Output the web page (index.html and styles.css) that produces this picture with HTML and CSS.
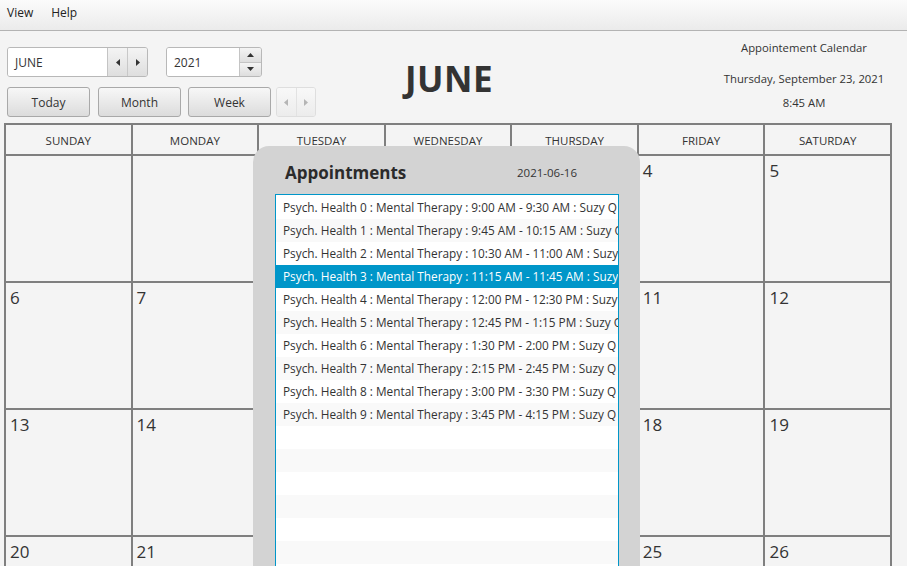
FILE: index.html
```html
<!DOCTYPE html>
<html>
<head>
<meta charset="utf-8">
<link rel="stylesheet" href="styles.css">
</head>
<body>
<div class="menubar"><span class="menu">View</span><span class="menu">Help</span></div>
<div class="toolbar">
  <div class="controls">
    <div class="ctl-row">
      <div class="combo">
        <div class="field month-field">JUNE</div>
        <div class="arrbtn"><svg width="4" height="7" viewBox="0 0 4 7"><path d="M4 0V7L0 3.5Z" fill="#333"/></svg></div>
        <div class="arrbtn"><svg width="4" height="7" viewBox="0 0 4 7"><path d="M0 0V7L4 3.5Z" fill="#333"/></svg></div>
      </div>
      <div class="spinner">
        <div class="field year-field">2021</div>
        <div class="spin-btns">
          <div class="spinbtn"><svg width="7" height="4" viewBox="0 0 7 4"><path d="M0 4H7L3.5 0Z" fill="#333"/></svg></div>
          <div class="spinbtn"><svg width="7" height="4" viewBox="0 0 7 4"><path d="M0 0H7L3.5 4Z" fill="#333"/></svg></div>
        </div>
      </div>
    </div>
    <div class="ctl-row">
      <div class="btn">Today</div>
      <div class="btn">Month</div>
      <div class="btn">Week</div>
      <div class="navpair">
        <div class="navbtn"><svg width="4" height="7" viewBox="0 0 4 7"><path d="M4 0V7L0 3.5Z" fill="#b5b5b5"/></svg></div>
        <div class="navbtn"><svg width="4" height="7" viewBox="0 0 4 7"><path d="M0 0V7L4 3.5Z" fill="#b5b5b5"/></svg></div>
      </div>
    </div>
  </div>
  <div class="title">JUNE</div>
  <div class="info">
    <div class="info-app">Appointement Calendar</div>
    <div class="info-date">Thursday, September 23, 2021</div>
    <div class="info-time">8:45 AM</div>
  </div>
</div>
<div class="calendar">
  <div class="dayname">SUNDAY</div>
  <div class="dayname">MONDAY</div>
  <div class="dayname">TUESDAY</div>
  <div class="dayname">WEDNESDAY</div>
  <div class="dayname">THURSDAY</div>
  <div class="dayname">FRIDAY</div>
  <div class="dayname">SATURDAY</div>
  <div class="day"></div><div class="day"></div><div class="day">1</div><div class="day">2</div><div class="day">3</div><div class="day">4</div><div class="day">5</div>
  <div class="day">6</div><div class="day">7</div><div class="day">8</div><div class="day">9</div><div class="day">10</div><div class="day">11</div><div class="day">12</div>
  <div class="day">13</div><div class="day">14</div><div class="day">15</div><div class="day">16</div><div class="day">17</div><div class="day">18</div><div class="day">19</div>
  <div class="day">20</div><div class="day">21</div><div class="day">22</div><div class="day">23</div><div class="day">24</div><div class="day">25</div><div class="day">26</div>
</div>
<div class="popup">
  <div class="popup-head">
    <div class="popup-title">Appointments</div>
    <div class="popup-date">2021-06-16</div>
  </div>
  <div class="list">
    <div class="item">Psych. Health 0 : Mental Therapy : 9:00 AM - 9:30 AM : Suzy Q</div>
    <div class="item">Psych. Health 1 : Mental Therapy : 9:45 AM - 10:15 AM : Suzy Q</div>
    <div class="item">Psych. Health 2 : Mental Therapy : 10:30 AM - 11:00 AM : Suzy Q</div>
    <div class="item selected">Psych. Health 3 : Mental Therapy : 11:15 AM - 11:45 AM : Suzy Q</div>
    <div class="item">Psych. Health 4 : Mental Therapy : 12:00 PM - 12:30 PM : Suzy Q</div>
    <div class="item">Psych. Health 5 : Mental Therapy : 12:45 PM - 1:15 PM : Suzy Q</div>
    <div class="item">Psych. Health 6 : Mental Therapy : 1:30 PM - 2:00 PM : Suzy Q</div>
    <div class="item">Psych. Health 7 : Mental Therapy : 2:15 PM - 2:45 PM : Suzy Q</div>
    <div class="item">Psych. Health 8 : Mental Therapy : 3:00 PM - 3:30 PM : Suzy Q</div>
    <div class="item">Psych. Health 9 : Mental Therapy : 3:45 PM - 4:15 PM : Suzy Q</div>
    <div class="item"></div>
    <div class="item"></div>
    <div class="item"></div>
    <div class="item"></div>
    <div class="item"></div>
    <div class="item"></div>
    <div class="item"></div>
  </div>
</div>
</body>
</html>
```

FILE: styles.css
```css
html, body {
  margin: 0;
  padding: 0;
}
body {
  width: 907px;
  height: 566px;
  overflow: hidden;
  position: relative;
  background: #f4f4f4;
  font-family: "Open Sans", "Noto Sans", sans-serif;
  font-size: 11.5px;
  color: #333;
}
.menubar {
  height: 30px;
  border-bottom: 1px solid #b3b3b3;
  background: linear-gradient(#fbfbfb, #ebebeb);
  display: flex;
  align-items: center;
  padding-left: 7px;
  gap: 18px;
}
.menu {
  font-size: 12px;
  color: #222;
  margin-top: -6px;
}
.toolbar {
  display: grid;
  grid-template-columns: 1fr auto 1fr;
  padding: 16px 16px 0 7px;
  height: 86px;
  box-sizing: border-box;
}
.controls {
  display: flex;
  flex-direction: column;
  gap: 10px;
}
.ctl-row {
  display: flex;
  align-items: center;
}
.combo {
  display: flex;
  height: 30px;
  width: 141px;
  border: 1px solid #b8b8b8;
  border-radius: 3px;
  box-sizing: border-box;
  overflow: hidden;
}
.field {
  background: #fff;
  display: flex;
  align-items: center;
  padding-left: 7px;
  font-size: 12px;
  color: #333;
}
.month-field {
  width: 93px;
  border-right: 1px solid #c4c4c4;
}
.arrbtn {
  width: 19px;
  display: flex;
  align-items: center;
  justify-content: center;
  background: linear-gradient(#f4f4f4, #dedede);
}
.arrbtn + .arrbtn {
  border-left: 1px solid #c8c8c8;
}
.spinner {
  display: flex;
  height: 30px;
  width: 96px;
  margin-left: 18px;
  border: 1px solid #b8b8b8;
  border-radius: 3px;
  box-sizing: border-box;
  overflow: hidden;
}
.year-field {
  width: 65px;
}
.spin-btns {
  flex: 1;
  display: flex;
  flex-direction: column;
  border-left: 1px solid #c4c4c4;
}
.spinbtn {
  flex: 1;
  display: flex;
  align-items: center;
  justify-content: center;
  background: linear-gradient(#f4f4f4, #dedede);
}
.spinbtn + .spinbtn {
  border-top: 1px solid #c4c4c4;
}
.btn {
  width: 83px;
  height: 30px;
  box-sizing: border-box;
  border: 1px solid #a9a9a9;
  border-radius: 3px;
  background: linear-gradient(#f7f7f7, #dcdcdc);
  display: flex;
  align-items: center;
  justify-content: center;
  font-size: 12px;
  color: #333;
  margin-right: 8px;
}
.btn:nth-child(2) { margin-right: 7px; }
.btn:nth-child(3) { margin-right: 5px; }
.navpair {
  display: flex;
  height: 30px;
  width: 40px;
  border: 1px solid #dedede;
  border-radius: 3px;
  box-sizing: border-box;
  overflow: hidden;
}
.navbtn {
  flex: 1;
  display: flex;
  align-items: center;
  justify-content: center;
  background: linear-gradient(#f8f8f8, #ececec);
}
.navbtn + .navbtn {
  border-left: 1px solid #e2e2e2;
}
.title {
  font-size: 35px;
  font-weight: 700;
  color: #333;
  padding-top: 8px;
  letter-spacing: 0.5px;
}
.info {
  justify-self: end;
  width: 178px;
  margin-right: -2px;
  text-align: center;
  font-size: 11.3px;
  color: #333;
  margin-top: -7px;
}
.info-date {
  margin-top: 16px;
}
.info-time {
  margin-top: 9px;
}
.calendar {
  margin: 6px 0 0 4px;
  width: 888px;
  background: #7f7f7f;
  padding: 2px 2px 0 2px;
  box-sizing: border-box;
  display: grid;
  grid-template-columns: repeat(7, 1fr);
  grid-template-rows: 29px repeat(4, 125px);
  gap: 2px;
}
.dayname {
  background: #f4f4f4;
  display: flex;
  align-items: center;
  justify-content: center;
  font-size: 11.5px;
  color: #333;
  padding-top: 1px;
}
.day {
  background: #f4f4f4;
  padding: 4px 4px;
  font-size: 17px;
  line-height: 22px;
  color: #333;
}
.popup {
  position: absolute;
  left: 253px;
  top: 146px;
  width: 387px;
  height: 440px;
  background: #d3d3d3;
  border-radius: 16px 16px 0 0;
}
.popup-head {
  display: flex;
  align-items: center;
  height: 48px;
  padding-left: 32px;
  padding-top: 5px;
  box-sizing: border-box;
}
.popup-title {
  font-size: 17px;
  font-weight: 700;
  color: #2b2b2b;
  width: 232px;
}
.popup-date {
  font-size: 11.5px;
  color: #333;
}
.list {
  margin-left: 22px;
  width: 344px;
  border: 1px solid #0096c9;
  box-sizing: border-box;
  background: #fff;
  padding-top: 1px;
  height: 400px;
  overflow: hidden;
}
.item {
  height: 23px;
  line-height: 23px;
  padding-left: 7px;
  white-space: nowrap;
  overflow: hidden;
  font-size: 11.8px;
  color: #333;
  background: #fff;
}
.item:nth-child(even) {
  background: #f9f9f9;
}
.item.selected {
  background: #0096c9;
  color: #fff;
}
```
